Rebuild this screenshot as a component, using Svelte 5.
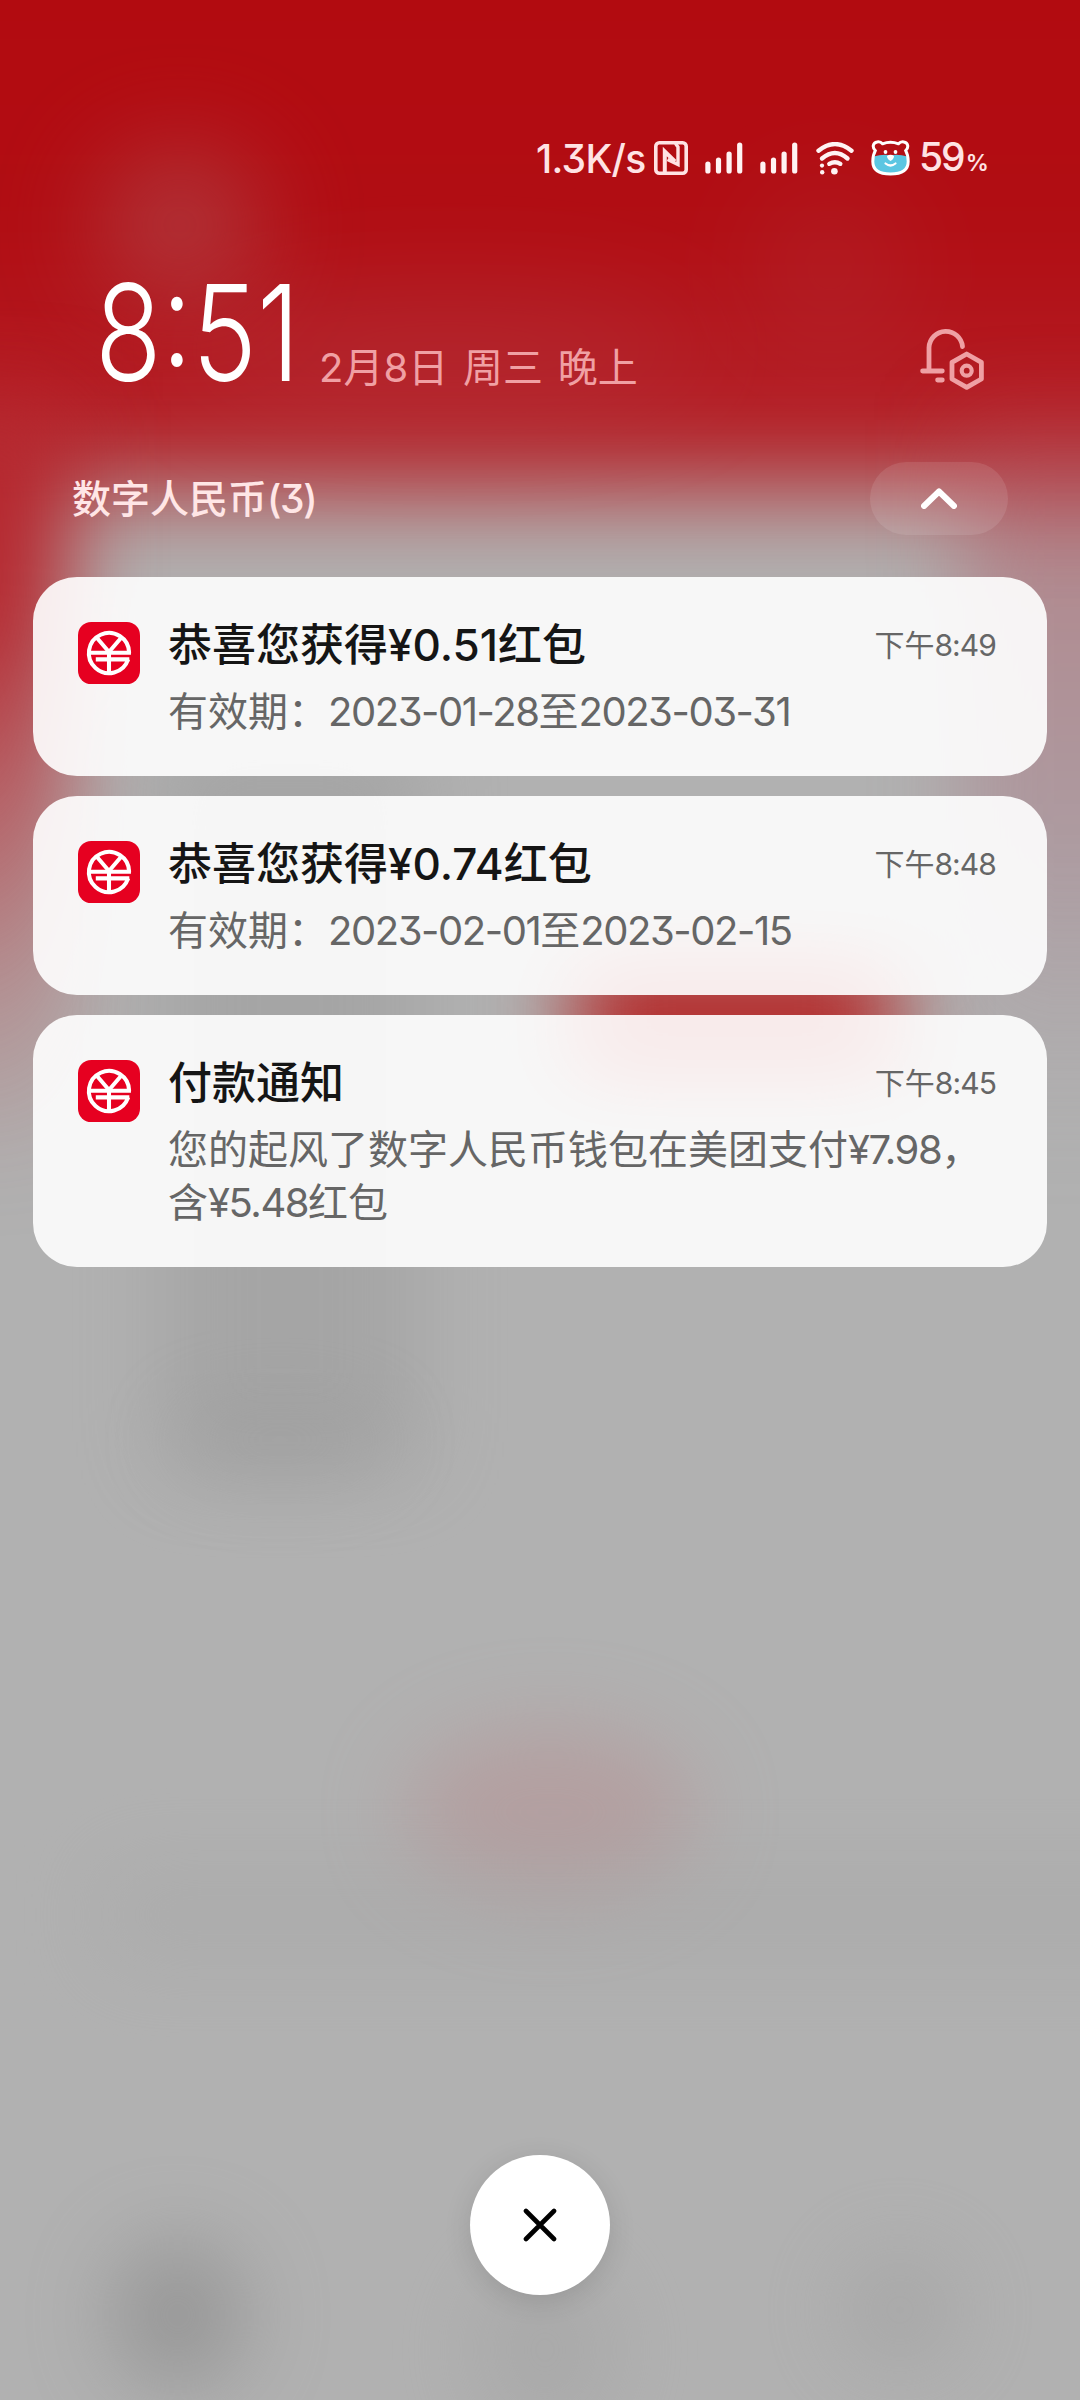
<script>
   const cards = [
      { title: "恭喜您获得¥0.51红包", time: "下午8:49", lines: ["有效期：2023-01-28至2023-03-31"] },
      { title: "恭喜您获得¥0.74红包", time: "下午8:48", lines: ["有效期：2023-02-01至2023-02-15"] },
      {
         title: "付款通知",
         time: "下午8:45",
         lines: ["您的起风了数字人民币钱包在美团支付¥7.98，", "含¥5.48红包"],
      },
   ];
   const bars = [12, 16, 22, 31];

   // latin runs get their own tracking
   function split(text) {
      return text.match(/[\x20-\xff]+|[^\x20-\xff]+/g).map((t) => {
         return { t, latin: t.charCodeAt(0) < 256 };
      });
   }
</script>

{#snippet mixed(text)}
   {#each split(text) as part}<span class:latin={part.latin}>{part.t}</span>{/each}
{/snippet}

{#snippet signal()}
   <svg class="signal" width="38" height="32" viewBox="0 0 38 32">
      {#each bars as h, i}
         <rect x={i * 10.6 + 0.3} y={31.5 - h} width="5.2" height={h} rx="2.6" fill="#fff3f3" />
      {/each}
   </svg>
{/snippet}

<div class="screen">
   <svg class="wall" width="1080" height="2400" viewBox="0 0 1080 2400" color-interpolation-filters="sRGB" aria-hidden="true">
      <defs>
         <linearGradient id="top" x1="0" y1="0" x2="0" y2="480" gradientUnits="userSpaceOnUse">
            <stop offset="0" stop-color="#b20b10" />
            <stop offset="0.5" stop-color="#b10d13" />
            <stop offset="0.85" stop-color="#b41e25" />
            <stop offset="1" stop-color="#b4282e" />
         </linearGradient>
         <linearGradient id="side" x1="0" y1="400" x2="0" y2="1180" gradientUnits="userSpaceOnUse">
            <stop offset="0" stop-color="#b6242b" />
            <stop offset="0.28" stop-color="#b62c33" />
            <stop offset="0.5" stop-color="#b8434a" stop-opacity="0.75" />
            <stop offset="0.75" stop-color="#b8434a" stop-opacity="0.3" />
            <stop offset="1" stop-color="#b8434a" stop-opacity="0" />
         </linearGradient>
         <linearGradient id="right" x1="0" y1="420" x2="0" y2="1150" gradientUnits="userSpaceOnUse">
            <stop offset="0" stop-color="#b63c46" stop-opacity="0.5" />
            <stop offset="0.25" stop-color="#b05866" stop-opacity="0.4" />
            <stop offset="0.6" stop-color="#a87c8a" stop-opacity="0.4" />
            <stop offset="1" stop-color="#a8a0a6" stop-opacity="0" />
         </linearGradient>
         <filter id="b55" x="-200%" y="-200%" width="500%" height="500%"><feGaussianBlur stdDeviation="55" /></filter>
         <filter id="b48" x="-60%" y="-60%" width="220%" height="220%"><feGaussianBlur stdDeviation="48" /></filter>
         <filter id="b42" x="-150%" y="-150%" width="400%" height="400%"><feGaussianBlur stdDeviation="42" /></filter>
         <filter id="b24" x="-60%" y="-200%" width="220%" height="500%"><feGaussianBlur stdDeviation="42 32" /></filter>
      </defs>
      <rect width="1080" height="2400" fill="#b1b1b1" />
      <rect x="-300" y="-300" width="1680" height="792" fill="url(#top)" filter="url(#b48)" />
      <rect x="-300" y="400" width="370" height="800" fill="url(#side)" filter="url(#b42)" />
      <rect x="960" y="420" width="320" height="740" fill="url(#right)" filter="url(#b42)" />
      <ellipse cx="180" cy="225" rx="75" ry="70" fill="#b06468" opacity="0.55" filter="url(#b55)" />
      <ellipse cx="450" cy="350" rx="260" ry="60" fill="#b4505a" opacity="0.25" filter="url(#b55)" />
      <ellipse cx="830" cy="270" rx="80" ry="90" fill="#b4505a" opacity="0.18" filter="url(#b55)" />
      <rect x="160" y="730" width="260" height="740" fill="#949494" opacity="0.4" filter="url(#b42)" />
      <ellipse cx="280" cy="1440" rx="110" ry="34" fill="#8e8e8e" opacity="0.32" filter="url(#b42)" />
      <rect x="575" y="955" width="320" height="130" fill="#b43434" filter="url(#b24)" />
      <ellipse cx="550" cy="1812" rx="145" ry="85" fill="#b68e90" opacity="0.5" filter="url(#b42)" />
      <rect x="100" y="1860" width="1100" height="110" fill="#a4a4a4" opacity="0.35" filter="url(#b42)" />
      <ellipse cx="178" cy="2315" rx="66" ry="74" fill="#7c7c7c" opacity="0.5" filter="url(#b42)" />
      <ellipse cx="545" cy="2350" rx="70" ry="90" fill="#9c9c9c" opacity="0.35" filter="url(#b42)" />
      <ellipse cx="900" cy="2310" rx="60" ry="60" fill="#9c9c9c" opacity="0.45" filter="url(#b42)" />
   </svg>

   <div class="status">
      <span class="net">1.3K/s</span>
      <svg width="34" height="34" viewBox="0 0 34 34" fill="none" stroke="#ffe3e4" stroke-width="3.6">
         <rect x="1.8" y="1.8" width="30.4" height="30.4" rx="3.5" />
         <path d="M10.8 31V10.5L21 20.5" stroke-width="4" />
         <path d="M21.5 2.5L24 6V23.5L13.5 18.5" stroke-width="3.4" />
      </svg>
      {@render signal()}
      {@render signal()}
      <svg class="wifi" width="38" height="33" viewBox="0 0 38 33" fill="none" stroke="#fff3f3" stroke-width="4.4" stroke-linecap="round">
         <path d="M2.5 8.7Q19-4.5 35.5 8.7" />
         <path d="M6 16.5Q19 5.5 31.5 16.5" />
         <path d="M13.3 21.8Q19 18.6 24.3 21.8" />
         <g fill="#fff3f3" stroke="none">
            <circle cx="18.4" cy="29.3" r="3.3" />
            <circle cx="6" cy="23.6" r="2.1" />
            <circle cx="6.2" cy="30.2" r="2.2" />
         </g>
      </svg>
      <svg class="bear" width="40" height="36" viewBox="0 0 40 36">
         <path
            d="M11.5 3.8C9 .8 3 1.2 2.3 5.5C2 7.7 3 9.5 4.4 10.6C2.4 14 1.8 17.5 1.8 21.5C1.8 30.5 9.5 34 19.5 34S37.2 30.5 37.2 21.5C37.2 17.5 36.6 14 34.6 10.6C36 9.5 37 7.7 36.7 5.5C36 1.2 30 .8 27.5 3.8C22.5 1.8 16.5 1.8 11.5 3.8Z"
            fill="#b30f15"
         />
         <path d="M2.5 16.5Q11 14 19.5 15.2Q28 14 36.5 16.5L37 24Q35 33.5 19.5 33.5Q4 33.5 2 24Z" fill="#5cc6e2" />
         <path
            d="M11.5 3.8C9 .8 3 1.2 2.3 5.5C2 7.7 3 9.5 4.4 10.6C2.4 14 1.8 17.5 1.8 21.5C1.8 30.5 9.5 34 19.5 34S37.2 30.5 37.2 21.5C37.2 17.5 36.6 14 34.6 10.6C36 9.5 37 7.7 36.7 5.5C36 1.2 30 .8 27.5 3.8C22.5 1.8 16.5 1.8 11.5 3.8Z"
            fill="none"
            stroke="#fff"
            stroke-width="3"
            stroke-linejoin="round"
         />
         <g fill="#fff">
            <circle cx="14.5" cy="12" r="1.9" />
            <circle cx="24.5" cy="12" r="1.9" />
            <path d="M16 16Q19.5 13.5 23 16Q23 19 19.5 21Q16 19 16 16Z" />
         </g>
         <path d="M14.5 23.5Q19.5 27.5 24.5 23.5" fill="none" stroke="#fff" stroke-width="2.2" stroke-linecap="round" />
      </svg>
      <span class="bat">59<small>%</small></span>
   </div>

   <div class="head">
      <span class="clock">8:51</span>
      <span class="date">2月8日 周三 晚上</span>
      <svg class="bell" width="64" height="62" viewBox="0 0 64 62" fill="none" stroke="#efa0a4" stroke-width="4.8" stroke-linecap="round" stroke-linejoin="round">
         <path d="M9 42V19.5A16.8 16.8 0 0 1 42.5 18.5" />
         <path d="M2.6 43H22.3M17.6 52H22.3" />
         <path d="M46.7 26L61.4 34.4V51L46.7 59.4L32 51V34.4Z" />
         <circle cx="46.7" cy="42.7" r="5" stroke-width="4.2" />
      </svg>
   </div>

   <div class="group">
      <span class="name">{@render mixed("数字人民币(3)")}</span>
      <button class="fold" aria-label="收起">
         <svg width="36" height="21" viewBox="0 0 36 21" fill="none" stroke="#fff" stroke-width="6" stroke-linecap="round" stroke-linejoin="round">
            <path d="M3 18L18 3.5L33 18" />
         </svg>
      </button>
   </div>

   <div class="cards">
      {#each cards as card}
         <div class="card">
            <svg class="logo" width="62" height="62" viewBox="0 0 61 61">
               <rect width="61" height="61" rx="13" fill="#e60020" />
               <g fill="none" stroke="#fff" stroke-width="4">
                  <path d="M50.3 30.3A19.8 19.8 0 1 0 49.3 36.8" />
                  <path d="M18.5 15.5L30.5 29.5L42.5 15.5" />
                  <path d="M10.5 30.2H52.1M17.5 36.8H50.5M30.5 29V50" />
               </g>
            </svg>
            <div class="text">
               <div class="row">
                  <span class="title">{@render mixed(card.title)}</span>
                  <span class="time">{@render mixed(card.time)}</span>
               </div>
               <div class="body">
                  {#each card.lines as line}
                     <div>{@render mixed(line)}</div>
                  {/each}
               </div>
            </div>
         </div>
      {/each}
   </div>

   <button class="close" aria-label="清除">
      <svg width="34" height="34" viewBox="0 0 34 34" stroke="#000" stroke-width="4.6" stroke-linecap="round">
         <path d="M3 3L31 31M31 3L3 31" />
      </svg>
   </button>
</div>

<style>
   :global(body) {
      margin: 0;
   }
   .screen {
      position: relative;
      z-index: 0;
      display: flex;
      flex-direction: column;
      width: 1080px;
      height: 2400px;
      overflow: hidden;
      font-family: Inter, "Noto Sans CJK SC", sans-serif;
      font-feature-settings: "cv09";
   }
   .wall {
      position: absolute;
      inset: 0;
      z-index: -1;
   }
   button {
      display: flex;
      align-items: center;
      justify-content: center;
      padding: 0;
      border: 0;
   }
   .status {
      display: flex;
      align-items: center;
      height: 40px;
      margin: 138px 0 0 536px;
      font-size: 39px;
      line-height: 40px;
      font-weight: 500;
      color: #ffe3e4;
   }
   .net {
      width: 118px;
      padding-top: 2px;
      letter-spacing: -0.7px;
   }
   .signal {
      margin-left: 17px;
   }
   .wifi {
      margin-left: 18px;
   }
   .bear {
      margin-left: 17px;
   }
   .bat {
      margin-left: 8px;
      padding-top: 4px;
      letter-spacing: -2px;
   }
   .bat small {
      margin-left: 2px;
      font-size: 23px;
      font-weight: 600;
   }
   .head {
      display: flex;
      align-items: flex-end;
      height: 100px;
      margin: 103px 96px 0 95px;
      color: #fff;
   }
   .clock {
      width: 224px;
      margin-bottom: -2px;
      font-size: 134px;
      line-height: 102px;
      font-weight: 300;
      white-space: nowrap;
      transform: scaleX(0.813);
      transform-origin: left;
   }
   .date {
      flex: 1;
      margin-bottom: -11px;
      font-size: 40px;
      line-height: 48px;
      word-spacing: 3.5px;
      color: #f0a0a4;
   }
   .bell {
      margin-bottom: -9px;
   }
   .group {
      display: flex;
      align-items: center;
      justify-content: space-between;
      height: 73px;
      margin: 81px 72px 0 72px;
   }
   .name {
      font-size: 39px;
      font-weight: 500;
      line-height: 48px;
      color: #ffe6e6;
   }
   .name .latin {
      letter-spacing: -1.3px;
   }
   .fold {
      width: 138px;
      height: 73px;
      border-radius: 37px;
      background: rgba(255, 255, 255, 0.1);
   }
   .cards {
      display: flex;
      flex-direction: column;
      gap: 20px;
      margin: 42px 33px 0;
   }
   .card {
      display: flex;
      padding: 41px 51px 38px 45px;
      border-radius: 44px;
      background: rgba(255, 255, 255, 0.9);
   }
   .logo {
      flex: none;
      margin: 4px 28px 0 0;
   }
   .text {
      flex: 1;
   }
   .row {
      display: flex;
      justify-content: space-between;
      line-height: 54px;
   }
   .title {
      font-size: 44px;
      font-weight: 500;
      color: #151515;
   }
   .time {
      font-size: 30px;
      color: #666;
   }
   .time .latin {
      letter-spacing: -0.9px;
   }
   .body {
      margin-top: 13px;
      font-size: 40px;
      line-height: 53px;
      color: #666;
      white-space: nowrap;
   }
   .body .latin {
      letter-spacing: -1.45px;
   }
   .close {
      width: 140px;
      height: 140px;
      margin: auto auto 105px;
      border-radius: 50%;
      background: #fff;
      box-shadow: 0 6px 28px rgba(0, 0, 0, 0.12);
   }
</style>
